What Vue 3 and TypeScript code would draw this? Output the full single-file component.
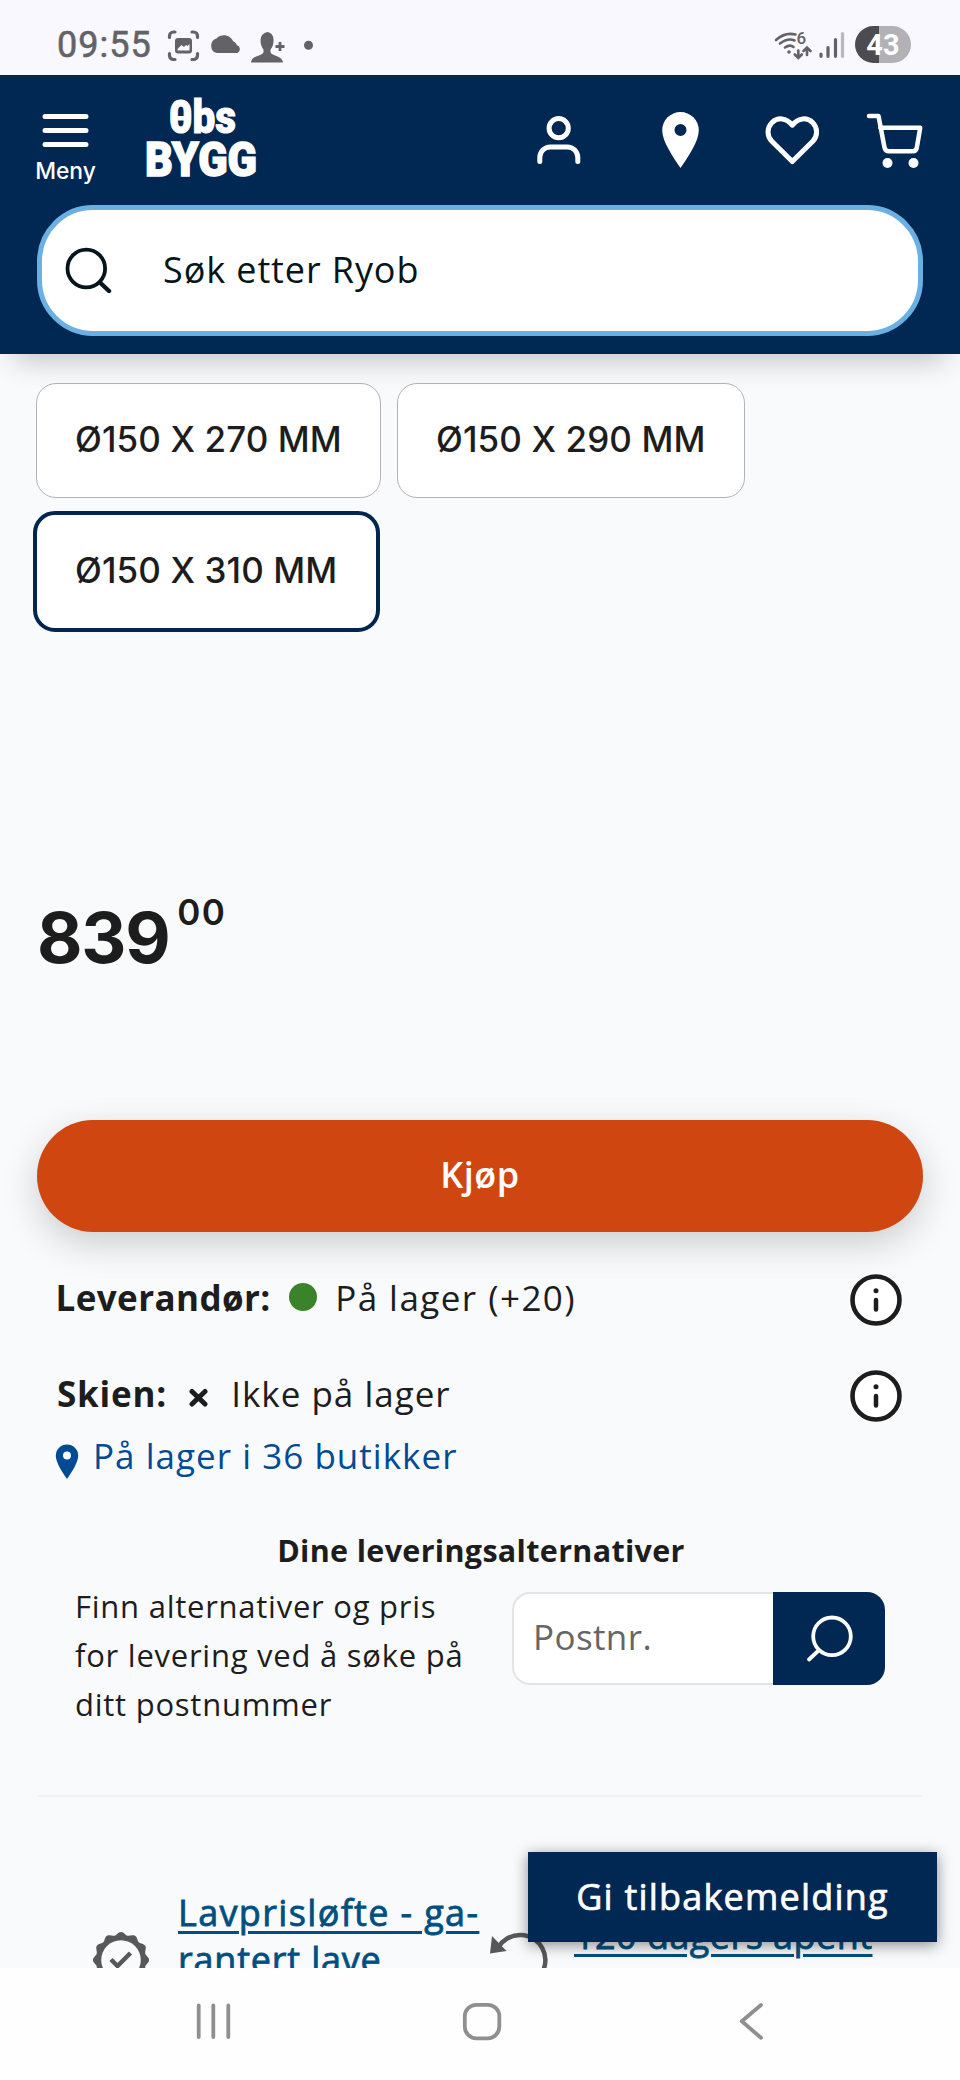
<script setup lang="ts">
interface Chip { label: string; cls: string }
const chips: Chip[] = [
  { label: 'Ø150 X 270 MM', cls: 'chip-a' },
  { label: 'Ø150 X 290 MM', cls: 'chip-b' },
  { label: 'Ø150 X 310 MM', cls: 'chip-selected' },
]
const deliveryLines = ['Finn alternativer og pris', 'for levering ved å søke på', 'ditt postnummer']

// Scalloped outline of the guarantee badge: twelve soft bumps around the centre.
const badgeOutline = 'M' + Array.from({ length: 120 }, (_, i) => {
  const a = (i / 120) * Math.PI * 2
  const r = 26.6 + 1.5 * Math.cos(12 * a)
  return `${(r * Math.sin(a)).toFixed(2)} ${(-r * Math.cos(a)).toFixed(2)}`
}).join('L') + 'Z'
</script>

<template>
  <div class="screen">
    <div class="status">
      <span class="clock">09:55</span>
      <svg class="status-left" width="150" height="40" viewBox="165 25 150 40">
        <g fill="none" stroke="#636266" stroke-width="3.200" stroke-linecap="round">
          <path d="M169.500 37.500V36a4 4 0 0 1 4-4h1.500M192 32h1.500a4 4 0 0 1 4 4v1.500M197.500 53.500V55.500a4 4 0 0 1-4 4H192M175 59.500h-1.500a4 4 0 0 1-4-4V53.500" />
        </g>
        <rect x="175" y="38" width="17" height="15.500" rx="3" fill="#636266" />
        <path d="M177.500 49l4-4 2.500 2 2-2 1.500 1 2-2v6.500h-12z" fill="#f9f8fe" />
        <path d="M217 53a7.500 7.500 0 0 1-.5-14.500A10 10 0 0 1 233 41a7 7 0 0 1 4 4.200A4.200 4.200 0 0 1 237.500 53z" fill="#636266" />
        <path d="M260.500 40q0-6 6.500-8 7 1 6.500 9 0 5-3 8.500v2.500q0 2 6 4 6 2 6.500 6.500h-32q.5-5 6.500-6.500 6-2 6-4v-2.500q-3-3.500-3-9.500z" fill="#636266" />
        <path d="M280 42v9M275.500 46.500h9" stroke="#636266" stroke-width="2.800" />
        <circle cx="308.500" cy="45.300" r="4.500" fill="#636266" />
      </svg>
      <svg class="status-right" width="146" height="50" viewBox="770 20 146 50">
        <g fill="none" stroke="#636266" stroke-width="2.600" stroke-linecap="round">
          <path d="M776 40q9-8 19.500-5.500M780 43.500q8-6 14.500-3M785 47.500q5-3.500 8.500-.5" />
          <path d="M798.300 50.500v7M794.800 54.500l3.500 3.500 3.500-3.500M807 55v-7M803.500 51l3.500-3.500 3.500 3.500" />
        </g>
        <circle cx="789" cy="52" r="1.800" fill="#636266" />
        <text x="796.500" y="43.800" class="wifi-gen">6</text>
        <g stroke-width="3.200" stroke-linecap="round">
          <path d="M821 54v2.300M828 47.500v8.800M835.500 39.500v16.800" stroke="#636266" />
          <path d="M842.500 33.500v22.800" stroke="#b9b8bd" />
        </g>
        <path d="M879 26H873.500a18.500 18.500 0 0 0 0 37H879z" fill="#4c4b50" />
        <path d="M879 26h13.500a18.500 18.500 0 0 1 0 37H879z" fill="#b2b1b6" />
        <text x="883" y="54.500" text-anchor="middle" class="battery">43</text>
      </svg>
    </div>

    <header class="header">
      <div class="header-row">
        <div class="menu">
          <svg width="48" height="36" viewBox="0 0 48 36">
            <path d="M3 4.500h41M3 18.500h41M3 32.500h41" stroke="#fff" stroke-width="5" stroke-linecap="round" />
          </svg>
          <span class="menu-label">Meny</span>
        </div>
        <svg class="logo" width="114" height="84" viewBox="144 96 114 84">
          <text x="169" y="132.500" textLength="67" lengthAdjust="spacingAndGlyphs" class="logo-top">0bs</text>
          <rect x="176" y="116" width="9" height="4.500" fill="#fff" />
          <text x="145" y="176" textLength="112" lengthAdjust="spacingAndGlyphs" class="logo-bottom">BYGG</text>
        </svg>
        <div class="actions">
          <svg width="46" height="60" viewBox="536 110 46 60" fill="none" stroke="#fff" stroke-width="5" stroke-linecap="round">
            <circle cx="558.700" cy="128.200" r="9.600" />
            <path d="M539.800 161.500v-4a10.500 10.500 0 0 1 10.500-10.500h17a10.500 10.500 0 0 1 10.500 10.500v4" />
          </svg>
          <svg class="a-pin" width="39" height="60" viewBox="661 110 39 60">
            <path fill-rule="evenodd" fill="#fff" d="M680.500 112a18.300 18.300 0 0 1 18.300 18.300c0 11-10.300 26-18.300 37.700-8-11.700-18.300-26.700-18.300-37.700a18.300 18.300 0 0 1 18.300-18.300zM680.500 124a6 6 0 1 0 0 12 6 6 0 0 0 0-12z" />
          </svg>
          <svg class="a-heart" width="55" height="60" viewBox="765 110 55 60" fill="none" stroke="#fff" stroke-width="5" stroke-linejoin="round">
            <path d="M792.300 161.500l-20.500-20.300a13.200 13.200 0 0 1 0-18.500c5.500-5.500 14.500-5.500 20.500 2.500 6-8 15-8 20.500-2.500a13.200 13.200 0 0 1 0 18.500z" />
          </svg>
          <svg class="a-cart" width="58" height="60" viewBox="866 110 58 60">
            <path d="M869 116h9.500l6 31.500q.8 3.800 4.500 3.800h23.500q3.700 0 4.300-3.700l3.400-19.800h-40" fill="none" stroke="#fff" stroke-width="4.500" stroke-linecap="round" stroke-linejoin="round" />
            <circle cx="887.500" cy="163" r="5" fill="#fff" />
            <circle cx="913.500" cy="163" r="5" fill="#fff" />
          </svg>
        </div>
      </div>
      <div class="search">
        <svg width="48" height="48" viewBox="64 246 48 48" fill="none" stroke="#06141c" stroke-width="3.800" stroke-linecap="round">
          <circle cx="86.300" cy="268.500" r="18.800" />
          <path d="M100.500 283l8.500 8" stroke-width="4.400" />
        </svg>
        <span class="search-text">Søk etter Ryob</span>
      </div>
    </header>

    <main class="main">
      <div class="chips">
        <button v-for="chip in chips" :key="chip.label" class="chip" :class="chip.cls">{{ chip.label }}</button>
      </div>

      <div class="price"><span class="kroner">839</span><sup class="ore">00</sup></div>

      <button class="buy">Kjøp</button>

      <section class="stock">
        <div class="stock-row">
          <b class="supplier">Leverandør:</b>
          <i class="dot"></i>
          <span class="supplier-state">På lager (+20)</span>
          <svg class="info" width="52" height="52" viewBox="0 0 52 52">
            <circle cx="26" cy="26" r="23.500" fill="#fff" stroke="#1d1d1d" stroke-width="4.600" />
            <circle cx="26" cy="16.700" r="2.500" fill="#1d1d1d" />
            <path d="M26 26v9.500" stroke="#1d1d1d" stroke-width="4.500" stroke-linecap="round" />
          </svg>
        </div>
        <div class="stock-row second">
          <b class="store">Skien:</b>
          <svg class="cross" width="20" height="20" viewBox="0 0 20 20"><path d="M3 3.500l13 12.500M16 3.500L3 16" stroke="#1d1d1d" stroke-width="5" stroke-linecap="round" /></svg>
          <span class="store-state">Ikke på lager</span>
          <svg class="info" width="52" height="52" viewBox="0 0 52 52">
            <circle cx="26" cy="26" r="23.500" fill="#fff" stroke="#1d1d1d" stroke-width="4.600" />
            <circle cx="26" cy="16.700" r="2.500" fill="#1d1d1d" />
            <path d="M26 26v9.500" stroke="#1d1d1d" stroke-width="4.500" stroke-linecap="round" />
          </svg>
        </div>
        <div class="stores">
          <svg width="24" height="36" viewBox="0 0 24 36"><path fill-rule="evenodd" fill="#004b93" d="M12 .5a11.200 11.200 0 0 1 11.200 11.200C23.200 18 17 28 12 35 7 28 .8 18 .8 11.700A11.200 11.200 0 0 1 12 .5zM12 7.500a4 4 0 1 0 0 8 4 4 0 0 0 0-8z" /></svg>
          <span>På lager i 36 butikker</span>
        </div>
      </section>

      <section class="delivery">
        <h3>Dine leveringsalternativer</h3>
        <div class="delivery-row">
          <p><span v-for="line in deliveryLines" :key="line">{{ line }}</span></p>
          <div class="postal">
            <div class="postal-field">Postnr.</div>
            <button class="postal-button">
              <svg width="50" height="50" viewBox="805 1613 50 50" fill="none" stroke="#fff" stroke-width="3.800" stroke-linecap="round">
                <circle cx="832" cy="1636.300" r="18.800" />
                <path d="M817.500 1651.500l-8.500 8" />
              </svg>
            </button>
          </div>
        </div>
      </section>

      <hr class="rule" />

      <section class="perks">
        <svg class="badge" width="60" height="60" viewBox="-30 -30 60 60">
          <path :d="badgeOutline" fill="#58585a" />
          <circle r="19.800" fill="#f9fafc" />
          <path d="M-10-.5l6.500 6.500L9.500-7" fill="none" stroke="#58585a" stroke-width="4.500" />
        </svg>
        <a class="perk first"><span class="p1">Lavprisløfte - ga-</span><span class="p2">rantert lave</span></a>
        <svg class="return" width="60" height="60" viewBox="488 1929 60 60">
          <path d="M498.500 1946a25.300 25.300 0 1 1 21 38.500" fill="none" stroke="#58585a" stroke-width="4.500" />
          <path d="M492 1935l-2 17.500 16.500-2.500z" fill="#58585a" />
        </svg>
        <a class="perk second-perk"><span class="p3">120 dagers åpent</span><span>kjøp</span></a>
      </section>
    </main>

    <button class="feedback">Gi tilbakemelding</button>

    <nav class="nav">
      <svg width="960" height="112" viewBox="0 1968 960 112" fill="none" stroke="#8f8f8f" stroke-width="3.800" stroke-linecap="round" stroke-linejoin="round">
        <path d="M198.700 2005.500v31.500M213.300 2005.500v31.500M228.300 2005.500v31.500" />
        <rect x="464.800" y="2004.800" width="34.500" height="33.500" rx="11.500" />
        <path d="M761 2005l-19.200 16.300 19.200 16.500" />
      </svg>
    </nav>
  </div>
</template>

<style>
body { margin: 0; }
</style>

<style scoped>
.screen { position: relative; width: 960px; height: 2080px; overflow: hidden; display: flex; flex-direction: column; background: #f9fafc; color: #1d1d1d; font-family: "Open Sans", "Noto Sans", sans-serif; font-size: 35px; }
.screen * { box-sizing: border-box; }
svg { display: block; flex: none; }
button { margin: 0; padding: 0; border: 0; font: inherit; color: inherit; }
span, b, sup, button { white-space: nowrap; }
.status { flex: none; height: 75px; display: flex; background: #f9f8fe; }
.clock { width: 108px; margin-left: 57px; font: 400 36px/90px Roboto, sans-serif; letter-spacing: 1px; color: #636266; -webkit-text-stroke: .6px #636266; }
.status-left { margin-top: 25px; }
.status-right { margin: 20px 44px 0 auto; }
.wifi-gen { font: 500 17px Roboto, sans-serif; fill: #636266; }
.battery { font: 700 29px Roboto, sans-serif; fill: #fff; }
.header { position: relative; z-index: 1; flex: none; height: 279px; background: #002853; box-shadow: 0 22px 26px -14px rgba(0, 0, 0, .2); }
.header-row { height: 130px; display: flex; align-items: flex-start; }
.menu { width: 60px; margin: 36.500px 0 0 35.500px; display: flex; flex-direction: column; align-items: center; color: #fff; }
.menu-label { font: 500 22.800px/30px Inter, sans-serif; margin-top: 8.500px; }
.logo { margin: 21px 0 0 48.500px; overflow: visible; }
.logo-top { font: 900 47px Roboto, sans-serif; fill: #fff; stroke: #fff; stroke-width: 1px; }
.logo-bottom { font: 900 48px Roboto, sans-serif; fill: #fff; stroke: #fff; stroke-width: 1.500px; }
.actions { display: flex; margin: 35px 36px 0 auto; }
.a-pin { margin-left: 79px; }
.a-heart { margin-left: 65px; }
.a-cart { margin-left: 46px; }
.search { width: 886px; height: 131px; margin-left: 37px; display: flex; align-items: flex-start; background: #fff; border: 5px solid #6bb0e2; border-radius: 56px; color: #06141c; }
.search svg { margin: 36px 0 0 22px; }
.search-text { margin-left: 51px; font-size: 36px; line-height: 119px; letter-spacing: .9px; }
.main { flex: 1; min-height: 0; overflow: hidden; padding-top: 29px; }
.chips { display: flex; flex-wrap: wrap; gap: 13px 16px; padding-left: 36px; align-items: flex-start; }
.chip { width: 345px; height: 115px; display: block; padding: 0 0 2px 38px; text-align: left; background: #fff; border: 1.500px solid #b3b3b5; border-radius: 20px; font: 500 35px/107px Inter, sans-serif; letter-spacing: .1px; }
.chip-b { width: 348px; }
.chip-selected { width: 347px; height: 121px; margin-left: -3px; border: 4px solid #00264f; border-radius: 22px; line-height: 107px; }
.price { height: 72px; margin: 268px 0 0 37px; display: flex; align-items: flex-start; font-family: Inter, sans-serif; font-weight: 700; }
.kroner { font-size: 70px; line-height: 76px; letter-spacing: -1.300px; }
.ore { font-size: 35px; line-height: 24px; margin-left: 8px; font-weight: 600; letter-spacing: 1.300px; }
.buy { display: block; width: 886px; height: 112px; margin: 148px 0 0 37px; border-radius: 56px; background: #cf4611; color: #fff; font-size: 36px; font-weight: 600; line-height: 109px; text-align: center; padding-bottom: 3px; letter-spacing: .5px; box-shadow: 0 12px 36px rgba(0, 0, 0, .18); }
.stock { padding: 42px 58px 0; }
.stock-row { height: 52px; display: flex; align-items: flex-start; line-height: 47px; }
.second { margin-top: 44px; }
.info { margin-left: auto; }
.supplier { margin-left: -2.500px; letter-spacing: .4px; }
.dot { flex: none; width: 28px; height: 28px; margin: 9px 0 0 18px; border-radius: 50%; background: #3b832b; }
.supplier-state { margin-left: 18.500px; letter-spacing: 1.450px; }
.store { margin-left: -1px; letter-spacing: .8px; }
.cross { margin: 18px 0 0 21.500px; }
.store-state { margin-left: 22.500px; letter-spacing: 1px; }
.stores { height: 54px; margin: 8px 0 0 -3px; display: flex; line-height: 51px; letter-spacing: 1.030px; color: #004b93; }
.stores svg { margin: 14px 0 0; }
.stores span { margin-left: 14px; }
.delivery h3 { margin: 46px 0 0 2px; height: 41px; font-size: 30.500px; font-weight: 700; line-height: 41px; letter-spacing: .320px; text-align: center; }
.delivery-row { height: 147px; margin-top: 11px; padding: 0 75px 0 75px; display: flex; justify-content: space-between; }
.delivery p { margin: 0; font-size: 31px; line-height: 49px; letter-spacing: .75px; display: flex; flex-direction: column; align-items: flex-start; }
.postal { width: 373px; height: 93px; margin-top: 10px; display: flex; }
.postal-field { width: 261px; padding-left: 19px; background: #fff; border: 2px solid #e3e4e7; border-right: 0; border-radius: 18px 0 0 18px; color: #666; line-height: 86px; letter-spacing: .4px; }
.postal-button { width: 112px; background: #002853; border-radius: 0 18px 18px 0; padding: 21px 0 0 32px; }
.postal-button svg { margin-bottom: 22px; }
.rule { width: 886px; height: 2px; margin: 65.500px 0 0 37px; border: 0; background: #f2f3f5; }
.perks { display: flex; align-items: flex-start; margin-top: 92px; padding-left: 91px; color: #004f80; font-size: 36px; line-height: 47px; -webkit-text-stroke: .8px #004f80; }
.badge { margin-top: 41.500px; }
.perk { display: flex; flex-direction: column; align-items: flex-start; }
.perk span { text-decoration: underline; text-decoration-thickness: 3px; text-underline-offset: 5px; }
.first { width: 310px; margin-left: 27px; }
.p1 { letter-spacing: 1.350px; }
.p2 { letter-spacing: .8px; }
.p3 { letter-spacing: .450px; }
.return { margin-top: 41px; }
.second-perk { margin: 23px 0 0 26px; }
.feedback { position: absolute; z-index: 2; left: 528px; top: 1852px; width: 409px; height: 90px; background: #002853; color: #fff; font-size: 36px; line-height: 90px; letter-spacing: 1.200px; -webkit-text-stroke: .7px #fff; text-align: center; box-shadow: 0 3px 14px rgba(0, 0, 0, .45); }
.nav { position: relative; z-index: 3; flex: none; height: 112px; background: #fefefe; }
</style>
